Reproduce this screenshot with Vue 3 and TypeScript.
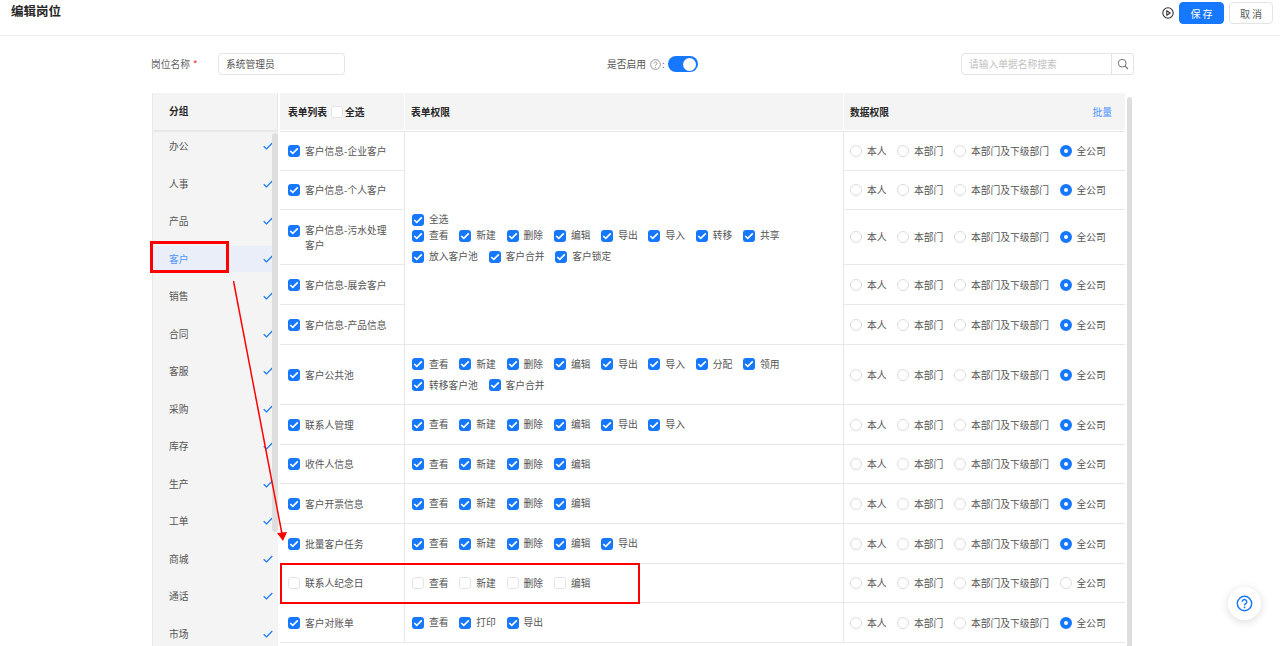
<script setup lang="ts">
interface Row { name: string; h: number; perms: string[][] | null; on: boolean; wrap?: boolean }
const groups = ['办公','人事','产品','客户','销售','合同','客服','采购','库存','生产','工单','商城','通话','市场']
const basic = ['查看','新建','删除','编辑']
const rows: Row[] = [
  { name: '客户信息-企业客户', h: 39, perms: null, on: true },
  { name: '客户信息-个人客户', h: 39, perms: null, on: true },
  { name: '客户信息-污水处理客户', h: 55, perms: null, on: true, wrap: true },
  { name: '客户信息-展会客户', h: 40, perms: null, on: true },
  { name: '客户信息-产品信息', h: 40, perms: null, on: true },
  { name: '客户公共池', h: 60, perms: [[...basic,'导出','导入','分配','领用'],['转移客户池','客户合并']], on: true },
  { name: '联系人管理', h: 40, perms: [[...basic,'导出','导入']], on: true },
  { name: '收件人信息', h: 39, perms: [basic], on: true },
  { name: '客户开票信息', h: 40, perms: [basic], on: true },
  { name: '批量客户任务', h: 40, perms: [[...basic,'导出']], on: true },
  { name: '联系人纪念日', h: 39, perms: [basic], on: false },
  { name: '客户对账单', h: 40, perms: [['查看','打印','导出']], on: true },
]
const sharedPerms = [[...basic,'导出','导入','转移','共享'],['放入客户池','客户合并','客户锁定']]
const scopes = ['本人','本部门','本部门及下级部门','全公司']
const gridRows = rows.map(r => r.h + 'px').join(' ')
</script>

<template>
  <div class="page">
    <header class="top">
      <h1 class="title">编辑岗位</h1>
      <div class="actions">
        <svg class="play" width="12" height="12" viewBox="0 0 12 12"><circle cx="6" cy="6" r="5.2" fill="none" stroke="#333" stroke-width="1.1"/><path d="M4.8 3.7v4.6L8.2 6z" fill="none" stroke="#333" stroke-width="1.1" stroke-linejoin="round"/></svg>
        <button class="btn primary">保 存</button>
        <button class="btn cancel">取 消</button>
      </div>
    </header>

    <section class="content">
      <div class="form">
        <div class="field">
          <label class="lbl">岗位名称<i class="req">*</i></label>
          <div class="input">系统管理员</div>
        </div>
        <div class="enable">
          <span class="enable-lbl">是否启用</span>
          <svg width="11" height="11" viewBox="0 0 12 12"><circle cx="6" cy="6" r="5.3" fill="none" stroke="#8c8c8c"/><path d="M4.4 4.8a1.6 1.6 0 1 1 2.5 1.3c-.6.4-.9.6-.9 1.2" fill="none" stroke="#8c8c8c"/><circle cx="6" cy="9" r=".6" fill="#8c8c8c"/></svg>
          <span class="colon">:</span>
          <span class="switch"><span class="knob"></span></span>
        </div>
        <div class="search">
          <div class="search-input">请输入单据名称搜索</div>
          <div class="search-btn">
            <svg width="12" height="12" viewBox="0 0 12 12"><circle cx="5.2" cy="5.2" r="3.9" fill="none" stroke="#777" stroke-width="1"/><path d="M8 8l3 3" stroke="#777" stroke-width="1.1"/></svg>
          </div>
        </div>
      </div>

      <div class="board">
        <aside class="side">
          <div class="side-head">分组</div>
          <ul class="side-list">
            <li v-for="g in groups" :key="g" class="side-item" :class="{ active: g === '客户' }">
              <span>{{ g }}</span>
              <svg class="tick" width="10" height="8" viewBox="0 0 10 8"><path d="M.7 4.2l2.8 2.7L9.3 1" fill="none" stroke="#1677ff" stroke-width="1.2"/></svg>
            </li>
          </ul>
          <span class="side-bar"></span>
        </aside>

        <div class="main">
          <div class="thead">
            <div class="th th-a">表单列表<span class="box off head-box"></span>全选</div>
            <div class="th th-b">表单权限</div>
            <div class="th th-c">数据权限<a class="batch">批量</a></div>
          </div>
          <div class="tbody" :style="{ gridTemplateRows: gridRows }">
            <template v-for="(r, i) in rows" :key="r.name">
              <div class="cell name" :class="{ wrapped: r.wrap }" :style="{ gridRow: i + 1 }">
                <span class="box" :class="{ off: !r.on }"><svg v-if="r.on" width="10" height="8" viewBox="0 0 10 8"><path d="M1.2 4l2.6 2.4L8.8 1.4" fill="none" stroke="#fff" stroke-width="1.6"/></svg></span>
                <span class="name-text">{{ r.name }}</span>
              </div>
              <div v-if="r.perms" class="cell perm" :style="{ gridRow: i + 1 }">
                <div v-for="(line, li) in r.perms" :key="li" class="perm-line">
                  <label v-for="p in line" :key="p" class="chk">
                    <span class="box" :class="{ off: !r.on }"><svg v-if="r.on" width="10" height="8" viewBox="0 0 10 8"><path d="M1.2 4l2.6 2.4L8.8 1.4" fill="none" stroke="#fff" stroke-width="1.6"/></svg></span>{{ p }}
                  </label>
                </div>
              </div>
              <div class="cell scope" :style="{ gridRow: i + 1 }">
                <label v-for="s in scopes" :key="s" class="radio">
                  <span class="dot" :class="{ sel: s === '全公司' && r.on }"></span>{{ s }}
                </label>
              </div>
            </template>
            <div class="cell perm shared">
              <label class="chk all">
                <span class="box"><svg width="10" height="8" viewBox="0 0 10 8"><path d="M1.2 4l2.6 2.4L8.8 1.4" fill="none" stroke="#fff" stroke-width="1.6"/></svg></span>全选
              </label>
              <div v-for="(line, li) in sharedPerms" :key="li" class="perm-line">
                <label v-for="p in line" :key="p" class="chk">
                  <span class="box"><svg width="10" height="8" viewBox="0 0 10 8"><path d="M1.2 4l2.6 2.4L8.8 1.4" fill="none" stroke="#fff" stroke-width="1.6"/></svg></span>{{ p }}
                </label>
              </div>
            </div>
          </div>
          <span class="main-bar"></span>
        </div>
      </div>
    </section>

    <div class="mark mark-side"></div>
    <div class="mark mark-row"></div>
    <svg class="arrow" width="70" height="270" viewBox="0 0 70 270">
      <path d="M.5 0L49 253" stroke="#f00" stroke-width="1.5" fill="none"/>
      <path d="M44 252l10-1-4 9z" fill="#f00"/>
    </svg>
    <button class="help">
      <svg width="17" height="17" viewBox="0 0 18 18"><circle cx="9" cy="9" r="7.6" fill="none" stroke="#1677ff" stroke-width="1.5"/><path d="M6.6 7.2a2.4 2.4 0 1 1 3.7 2c-.9.6-1.3 1-1.3 1.9" fill="none" stroke="#1677ff" stroke-width="1.5"/><circle cx="9" cy="13.2" r=".9" fill="#1677ff"/></svg>
    </button>
  </div>
</template>

<style>
html, body { margin: 0; background: #fff; overflow: hidden; }
</style>

<style scoped>
.page { position: relative; width: 1280px; height: 646px; overflow: hidden; font-family: "Noto Sans CJK SC", "Noto Sans", sans-serif; font-size: 9.75px; color: #555; background: #fff; }
.top { height: 36px; box-sizing: border-box; border-bottom: 1px solid #f0f0f0; display: flex; justify-content: space-between; align-items: flex-start; padding: 2px 7px 0 11px; }
.title { margin: -1px 0 0; font-size: 12.5px; line-height: 20px; font-weight: 700; color: #262626; }
.actions { display: flex; align-items: center; gap: 5px; }
.btn { width: 45px; height: 22px; padding: 0; border: 1px solid #e4e4e4; border-radius: 4px; background: #fff; color: #595959; font: inherit; font-size: 10px; }
.btn.cancel { width: 44px; }
.btn.primary { background: #1677ff; border-color: #1677ff; color: #fff; }
.content { padding: 17px 0 0 151px; }
.form { width: 983px; height: 22px; display: flex; align-items: center; }
.field { display: flex; align-items: center; }
.lbl { width: 67px; color: #666; }
.req { color: #f5222d; font-style: normal; margin-left: 3px; }
.input { width: 127px; height: 22px; box-sizing: border-box; border: 1px solid #e4e4e4; border-radius: 4px; line-height: 20px; padding-left: 7px; }
.enable { display: flex; align-items: center; margin-left: 262px; gap: 1px; }
.enable-lbl { margin-right: 3px; }
.colon { margin-right: 2px; }
.switch { width: 30px; height: 16px; border-radius: 8px; background: #1677ff; position: relative; display: block; }
.knob { position: absolute; right: 2px; top: 1.5px; width: 13px; height: 13px; border-radius: 50%; background: #fff; }
.search { margin-left: auto; display: flex; }
.search-input { width: 151px; height: 22px; box-sizing: border-box; border: 1px solid #e4e4e4; border-radius: 4px 0 0 4px; line-height: 20px; padding-left: 7px; color: #bfbfbf; }
.search-btn { width: 22px; height: 22px; box-sizing: border-box; border: 1px solid #e4e4e4; border-left: 0; border-radius: 0 4px 4px 0; display: flex; align-items: center; justify-content: center; }
.board { margin-top: 18px; margin-left: 1px; width: 981px; display: flex; gap: 2px; }
.side { width: 126px; flex: none; position: relative; height: 560px; background: #f4f4f4; border-left: 1px solid #e8e8e8; box-sizing: border-box; }
.side-head { height: 37px; line-height: 37px; padding-left: 16px; font-weight: 700; color: #262626; border-bottom: 2px solid #e8e8e8; border-right: 1px solid #e8e8e8; }
.side-list { list-style: none; margin: 1px 0 0; padding: 0; }
.side-item { height: 26px; margin-bottom: 11.5px; display: flex; align-items: center; justify-content: space-between; padding: 0 5px 0 16px; }
.side-item.active { background: #e9eef8; color: #4d94ff; }
.tick { display: block; }
.side-bar { position: absolute; right: 0; top: 40px; width: 6px; height: 399px; border-radius: 3px; background: #dedede; }
.main { flex: 1; min-width: 0; position: relative; padding-right: 8px; }
.thead { display: grid; grid-template-columns: 124px 438px 281px; column-gap: 1px; height: 37px; }
.th { background: #f4f4f4; display: flex; align-items: center; padding-left: 8px; font-weight: 700; color: #262626; }
.head-box { width: 11px; height: 11px; margin: 0 2px 0 4px; }
.th-b, .th-c { padding-left: 6px; }
.th-c { justify-content: space-between; padding-right: 13px; }
.batch { color: #4d94ff; font-weight: 400; }
.tbody { display: grid; grid-template-columns: 124px 438px 281px; column-gap: 1px; margin-top: 1px; border-bottom: 1px solid #e8e8e8; }
.cell { border-top: 1px solid #e8e8e8; display: flex; align-items: center; box-sizing: border-box; }
.name { grid-column: 1; padding: 0 8px; box-shadow: 1px 0 0 #e8e8e8; }
.name.wrapped { align-items: flex-start; padding-top: 13px; }
.name.wrapped .box { margin-top: 1.5px; }
.name.wrapped .name-text { line-height: 14.5px; }
.name-text { margin-left: 5px; line-height: 16px; width: 91px; }
.perm { grid-column: 2; flex-direction: column; align-items: flex-start; justify-content: center; padding-left: 7px; box-shadow: 1px 0 0 #e8e8e8; }
.shared { grid-row: 1 / 6; padding-top: 3px; }
.perm-line { display: flex; flex-wrap: wrap; min-height: 21px; align-items: center; }
.chk { display: flex; align-items: center; gap: 5px; margin-right: 10.8px; line-height: 21px; white-space: nowrap; }
.chk.all { height: 15px; }
.shared .perm-line:nth-child(2) { min-height: 17px; }
.shared .perm-line:nth-child(2) .chk { line-height: 17px; }
.shared .perm-line:nth-child(3) { margin-top: 2px; }
.box { width: 12px; height: 12px; border-radius: 3px; background: #1677ff; display: inline-flex; align-items: center; justify-content: center; flex: none; box-sizing: border-box; }
.box svg { display: block; }
.box.off { background: #fff; border: 1px solid #e4e4e4; }
.scope { grid-column: 3; padding-left: 6px; }
.radio { display: flex; align-items: center; gap: 5px; margin-right: 10.6px; white-space: nowrap; }
.dot { width: 12px; height: 12px; border-radius: 50%; border: 1px solid #dcdcdc; box-sizing: border-box; flex: none; background: #fff; }
.dot.sel { border: 4px solid #1677ff; }
.main-bar { position: absolute; right: 1px; top: 4px; width: 5px; height: 556px; background: #dedede; border-radius: 3px; }
.mark { position: absolute; border: 2px solid #f00; box-sizing: border-box; pointer-events: none; }
.mark-side { left: 150px; top: 241px; width: 79px; height: 32px; border-width: 3px; }
.mark-row { left: 280px; top: 563px; width: 360px; height: 41px; }
.arrow { position: absolute; left: 233px; top: 281px; pointer-events: none; }
.help { position: absolute; left: 1228px; top: 587px; width: 33px; height: 33px; padding: 0; border: 0; border-radius: 50%; background: #fff; box-shadow: 0 2px 10px rgba(0,0,0,.14); display: flex; align-items: center; justify-content: center; }
</style>
